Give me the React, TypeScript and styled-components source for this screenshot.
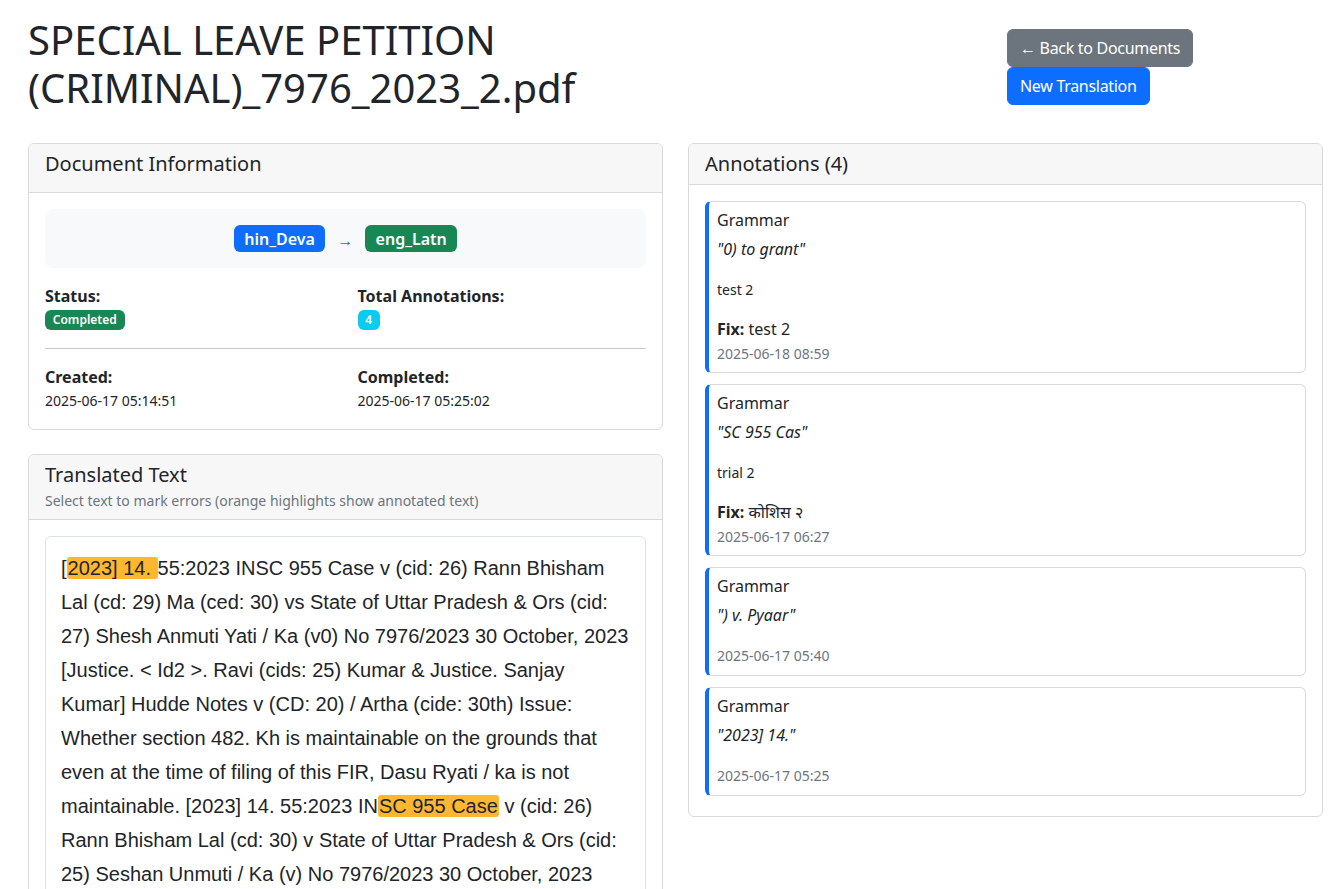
import React from "react";
import styled, { createGlobalStyle, css } from "styled-components";

const GlobalStyle = createGlobalStyle`
  html, body {
    margin: 0;
    padding: 0;
    overflow: hidden;
    background: #ffffff;
  }
  body {
    font-family: "Noto Sans", "Open Sans", sans-serif;
    font-size: 16px;
    line-height: 1.5;
    color: #212529;
  }
  * { box-sizing: border-box; }
`;

const Page = styled.div`
  padding: 16px 20px 0 28px;
  width: 1343px;
`;

const Header = styled.header`
  display: flex;
  align-items: flex-start;
  margin-bottom: 31px;
`;

const Title = styled.h1`
  flex: 1;
  margin: 0;
  font-size: 40px;
  font-weight: 400;
  line-height: 1.2;
  color: #212529;
`;

const Actions = styled.div`
  width: 316px;
  display: flex;
  flex-wrap: wrap;
  align-content: flex-start;
  padding-top: 13px;
`;

const Button = styled.button<{ $variant: "secondary" | "primary" }>`
  font-family: inherit;
  font-size: 16px;
  letter-spacing: -0.3px;
  line-height: 1.5;
  padding: 6px 12px;
  border-radius: 6px;
  border: 1px solid transparent;
  color: #fff;
  cursor: pointer;
  ${(p) =>
    p.$variant === "secondary"
      ? css`
          background: #6c757d;
          border-color: #6c757d;
          margin-right: 8px;
        `
      : css`
          background: #0d6efd;
          border-color: #0d6efd;
        `}
`;

const Columns = styled.div`
  display: grid;
  grid-template-columns: 635px 635px;
  column-gap: 25px;
  align-items: start;
`;

const Column = styled.div`
  display: flex;
  flex-direction: column;
  gap: 24px;
`;

const Card = styled.section`
  border: 1px solid #d9dadb;
  border-radius: 6px;
  background: #fff;
  overflow: hidden;
`;

const CardHeader = styled.div`
  background: #f7f7f7;
  border-bottom: 1px solid #d9dadb;
  padding: 8px 16px;
`;

const CardTitle = styled.h5<{ $gap?: number }>`
  margin: 0 0 ${(p) => p.$gap ?? 0}px;
  font-size: 20px;
  font-weight: 400;
  line-height: 1.2;
`;

const Muted = styled.small`
  display: block;
  font-size: 14px;
  line-height: 1.5;
  color: #6c757d;
`;

const CardBody = styled.div<{ $bottom?: number }>`
  padding: 16px 16px ${(p) => p.$bottom ?? 16}px;
`;

const LangBox = styled.div`
  background: #f8f9fa;
  border-radius: 8px;
  padding: 16px;
  display: flex;
  justify-content: center;
  align-items: center;
  gap: 12px;
  margin-bottom: 16px;
`;

const Badge = styled.span<{ $bg: string; $size: number }>`
  display: inline-block;
  background: ${(p) => p.$bg};
  color: #fff;
  font-size: ${(p) => p.$size}px;
  font-weight: 600;
  line-height: 1;
  padding: 0.35em 0.65em;
  border-radius: 6px;
  white-space: nowrap;
`;

const Arrow = styled.span`
  color: #0d6efd;
  font-size: 16px;
  line-height: 1;
  padding-top: 2px;
`;

const InfoGrid = styled.div`
  display: grid;
  grid-template-columns: 1fr 1fr;
  column-gap: 24px;
`;

const InfoCell = styled.div`
  display: flex;
  flex-direction: column;
  align-items: flex-start;
`;

const Label = styled.strong`
  font-weight: 700;
  font-size: 16px;
  line-height: 24px;
`;

const BadgeLine = styled.div`
  height: 24px;
  display: flex;
  align-items: center;
`;

const Value = styled.small`
  font-size: 14px;
  line-height: 24px;
`;

const Rule = styled.hr`
  border: 0;
  border-top: 1px solid #c8c9ca;
  margin: 16px 0;
`;

const TextBox = styled.div`
  border: 1px solid #dee2e6;
  border-radius: 6px;
  padding: 14px 15px 16px;
  font-family: "Liberation Sans", Arial, sans-serif;
  font-size: 20px;
  line-height: 34px;
  color: #212529;
`;

const Mark = styled.mark`
  background: #ffb631;
  color: inherit;
  padding: 0 1px;
  border-radius: 3px;
`;

const AnnotationList = styled.div`
  display: flex;
  flex-direction: column;
  gap: 11px;
`;

const Annotation = styled.article<{ $compact?: boolean }>`
  border: 1px solid #d9dadb;
  border-left: 4px solid #0d6efd;
  border-radius: 6px;
  padding: 6px 8px ${(p) => (p.$compact ? 7 : 6)}px;
`;

const AnnType = styled.h6`
  margin: 0 0 5px;
  font-size: 16px;
  font-weight: 400;
  line-height: 24px;
`;

const Quote = styled.p`
  margin: 0 0 17px;
  font-style: italic;
  line-height: 24px;
`;

const Comment = styled.p`
  margin: 0 0 15px;
  font-size: 14px;
  line-height: 24px;
`;

const Fix = styled.p`
  margin: 0 0 1px;
  line-height: 24px;
  b { font-weight: 700; }
`;

const Stamp = styled.small`
  display: block;
  font-size: 14px;
  line-height: 24px;
  color: #6c757d;
`;

type Ann = { type: string; quote: string; comment?: string; fix?: string; date: string };

const annotations: Ann[] = [
  { type: "Grammar", quote: "0) to grant", comment: "test 2", fix: "test 2", date: "2025-06-18 08:59" },
  { type: "Grammar", quote: "SC 955 Cas", comment: "trial 2", fix: "कोशिस २", date: "2025-06-17 06:27" },
  { type: "Grammar", quote: ") v. Pyaar", date: "2025-06-17 05:40" },
  { type: "Grammar", quote: "2023] 14.", date: "2025-06-17 05:25" },
];

export default function App() {
  return (
    <>
      <GlobalStyle />
      <Page>
        <Header>
          <Title>SPECIAL LEAVE PETITION (CRIMINAL)_7976_2023_2.pdf</Title>
          <Actions>
            <Button $variant="secondary">← Back to Documents</Button>
            <Button $variant="primary">New Translation</Button>
          </Actions>
        </Header>
        <Columns>
          <Column>
            <Card>
              <CardHeader>
                <CardTitle $gap={8}>Document Information</CardTitle>
              </CardHeader>
              <CardBody>
                <LangBox>
                  <Badge $bg="#0d6efd" $size={16}>hin_Deva</Badge>
                  <Arrow>→</Arrow>
                  <Badge $bg="#198754" $size={16}>eng_Latn</Badge>
                </LangBox>
                <InfoGrid>
                  <InfoCell>
                    <Label>Status:</Label>
                    <BadgeLine>
                      <Badge $bg="#198754" $size={12}>Completed</Badge>
                    </BadgeLine>
                  </InfoCell>
                  <InfoCell>
                    <Label>Total Annotations:</Label>
                    <BadgeLine>
                      <Badge $bg="#0dcaf0" $size={12}>4</Badge>
                    </BadgeLine>
                  </InfoCell>
                </InfoGrid>
                <Rule />
                <InfoGrid>
                  <InfoCell>
                    <Label>Created:</Label>
                    <Value>2025-06-17 05:14:51</Value>
                  </InfoCell>
                  <InfoCell>
                    <Label>Completed:</Label>
                    <Value>2025-06-17 05:25:02</Value>
                  </InfoCell>
                </InfoGrid>
              </CardBody>
            </Card>
            <Card>
              <CardHeader>
                <CardTitle $gap={3}>Translated Text</CardTitle>
                <Muted>Select text to mark errors (orange highlights show annotated text)</Muted>
              </CardHeader>
              <CardBody>
                <TextBox>
                  [<Mark>2023] 14. </Mark>55:2023 INSC 955 Case v (cid: 26) Rann Bhisham Lal (cd: 29) Ma (ced: 30) vs
                  State of Uttar Pradesh &amp; Ors (cid: 27) Shesh Anmuti Yati / Ka (v0) No 7976/2023 30 October, 2023
                  [Justice. &lt; Id2 &gt;. Ravi (cids: 25) Kumar &amp; Justice. Sanjay Kumar] Hudde Notes v (CD: 20) /
                  Artha (cide: 30th) Issue: Whether section 482. Kh is maintainable on the grounds that even at the time
                  of filing of this FIR, Dasu Ryati / ka is not maintainable. [2023] 14. 55:2023 IN
                  <Mark>SC 955 Case</Mark> v (cid: 26) Rann Bhisham Lal (cd: 30) v State of Uttar Pradesh &amp; Ors
                  (cid: 25) Seshan Unmuti / Ka (v) No 7976/2023 30 October, 2023 [Justice. Ravi Kumar &amp; Justice.
                  Sanjay Kumar] Headnotes Issue: Whether the petition under section 482 is maintainable.
                </TextBox>
              </CardBody>
            </Card>
          </Column>
          <Column>
            <Card>
              <CardHeader>
                <CardTitle>Annotations (4)</CardTitle>
              </CardHeader>
              <CardBody $bottom={20}>
                <AnnotationList>
                  {annotations.map((a, i) => (
                    <Annotation key={i} $compact={!a.comment}>
                      <AnnType>{a.type}</AnnType>
                      <Quote>"{a.quote}"</Quote>
                      {a.comment && <Comment>{a.comment}</Comment>}
                      {a.fix && (
                        <Fix>
                          <b>Fix:</b> {a.fix}
                        </Fix>
                      )}
                      <Stamp>{a.date}</Stamp>
                    </Annotation>
                  ))}
                </AnnotationList>
              </CardBody>
            </Card>
          </Column>
        </Columns>
      </Page>
    </>
  );
}
